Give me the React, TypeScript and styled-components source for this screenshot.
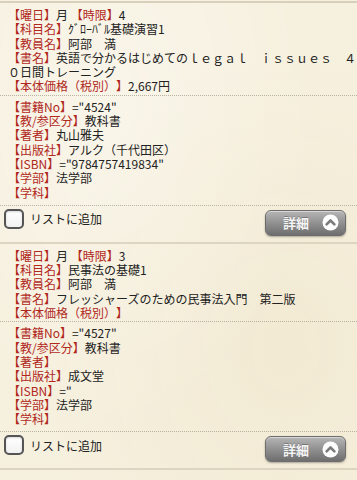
import React from "react";
import styled, { createGlobalStyle } from "styled-components";

const GlobalStyle = createGlobalStyle`
  html, body {
    margin: 0;
    padding: 0;
    background: #f6f0de;
  }
  body {
    font-family: "Noto Sans CJK JP", "Noto Sans", sans-serif;
    font-size: 12px;
    color: #222;
    text-spacing-trim: space-all;
  }
`;

const Page = styled.div`
  width: 357px;
  min-height: 480px;
  overflow: hidden;
  background:
    radial-gradient(ellipse at 30% 20%, rgba(255, 255, 255, 0.35), transparent 60%),
    radial-gradient(ellipse at 80% 70%, rgba(235, 222, 190, 0.35), transparent 60%),
    #f6f0de;
  padding-top: 1px;
`;

const List = styled.div`
  border-top: 2px solid #d9d0bc;
`;

const Item = styled.section`
  padding: 5px 0 0 8px;
  border-bottom: 2px solid #ddd5c2;
`;

const Block = styled.div`
  line-height: 14.3px;
`;

const Line = styled.div`
  word-break: break-all;
  text-spacing-trim: space-all;
`;

const Label = styled.span`
  color: #b0281c;
`;

const Value = styled.span`
  color: #222;
`;

const Dotted = styled.div<{ $gapTop: number; $gapBottom: number }>`
  border-top: 1px dotted #b9b1a1;
  margin: ${(p) => p.$gapTop}px 0 ${(p) => p.$gapBottom}px -8px;
`;

const Footer = styled.div`
  display: flex;
  justify-content: space-between;
  align-items: flex-start;
  margin: 0 0 0 -8px;
  padding: 0 11px 6px 4px;
`;

const CheckLabel = styled.label`
  display: flex;
  align-items: center;
  gap: 6px;
  height: 20px;
  font-size: 12px;
  color: #222;
`;

const Box = styled.span`
  box-sizing: border-box;
  width: 20px;
  height: 20px;
  border: 2px solid #555;
  border-radius: 5px;
  background: linear-gradient(#ffffff, #f2f2f2);
  box-shadow: inset 0 1px 2px rgba(0, 0, 0, 0.15);
`;

const DetailButton = styled.button`
  box-sizing: border-box;
  width: 81px;
  height: 26px;
  margin-top: 1px;
  border: 1px solid #6d6d6d;
  border-radius: 6px;
  background: linear-gradient(#b6b6b6, #919191 50%, #6e6e6e);
  box-shadow: 0 1px 2px rgba(0, 0, 0, 0.3), inset 0 1px 0 rgba(255, 255, 255, 0.45);
  display: flex;
  align-items: center;
  justify-content: space-between;
  padding: 0 6px 0 17px;
  color: #f4f4f4;
  font-family: "Noto Sans CJK JP", sans-serif;
  font-size: 13px;
  font-weight: bold;
  text-shadow: 0 -1px 0 rgba(0, 0, 0, 0.25);
`;

const Summary = styled.div`
  text-align: center;
  padding-top: 12px;
  font-size: 12px;
  color: #222;
`;

type Field = { label: string; value?: string };
type Row = Field[];

type Book = {
  top: Row[];
  bottom: Row[];
};

const books: Book[] = [
  {
    top: [
      [
        { label: "【曜日】", value: "月 " },
        { label: "【時限】", value: "4" },
      ],
      [{ label: "【科目名】", value: "ｸﾞﾛｰﾊﾞﾙ基礎演習1" }],
      [{ label: "【教員名】", value: "阿部　満" }],
      [
        {
          label: "【書名】",
          value: "英語で分かるはじめてのｌｅｇａｌ　ｉｓｓｕｅｓ　４０日間トレーニング",
        },
      ],
      [{ label: "【本体価格（税別）】", value: "2,667円" }],
    ],
    bottom: [
      [{ label: "【書籍No】", value: '="4524"' }],
      [{ label: "【教/参区分】", value: "教科書" }],
      [{ label: "【著者】", value: "丸山雅夫" }],
      [{ label: "【出版社】", value: "アルク（千代田区）" }],
      [{ label: "【ISBN】", value: '="9784757419834"' }],
      [{ label: "【学部】", value: "法学部" }],
      [{ label: "【学科】" }],
    ],
  },
  {
    top: [
      [
        { label: "【曜日】", value: "月 " },
        { label: "【時限】", value: "3" },
      ],
      [{ label: "【科目名】", value: "民事法の基礎1" }],
      [{ label: "【教員名】", value: "阿部　満" }],
      [{ label: "【書名】", value: "フレッシャーズのための民事法入門　第二版" }],
      [{ label: "【本体価格（税別）】" }],
    ],
    bottom: [
      [{ label: "【書籍No】", value: '="4527"' }],
      [{ label: "【教/参区分】", value: "教科書" }],
      [{ label: "【著者】" }],
      [{ label: "【出版社】", value: "成文堂" }],
      [{ label: "【ISBN】", value: '="' }],
      [{ label: "【学部】", value: "法学部" }],
      [{ label: "【学科】" }],
    ],
  },
];

const UpIcon = () => (
  <svg width="17" height="17" viewBox="0 0 17 17" aria-hidden="true">
    <circle cx="8.5" cy="8.5" r="8" fill="#fdfdfd" />
    <polyline
      points="4.6,10.4 8.5,6.5 12.4,10.4"
      fill="none"
      stroke="#7b7b7b"
      strokeWidth="2.6"
      strokeLinecap="round"
      strokeLinejoin="round"
    />
  </svg>
);

const Rows = ({ rows }: { rows: Row[] }) => (
  <Block>
    {rows.map((row, i) => (
      <Line key={i}>
        {row.map((f, j) => (
          <React.Fragment key={j}>
            <Label>{f.label}</Label>
            {f.value && <Value>{f.value}</Value>}
          </React.Fragment>
        ))}
      </Line>
    ))}
  </Block>
);

export default function App() {
  return (
    <>
      <GlobalStyle />
      <Page>
        <List>
          {books.map((b, i) => (
            <Item key={i}>
              <Rows rows={b.top} />
              <Dotted $gapTop={1} $gapBottom={4} />
              <Rows rows={b.bottom} />
              <Dotted $gapTop={5} $gapBottom={3} />
              <Footer>
                <CheckLabel>
                  <Box />
                  リストに追加
                </CheckLabel>
                <DetailButton type="button">
                  詳細
                  <UpIcon />
                </DetailButton>
              </Footer>
            </Item>
          ))}
        </List>
        <Summary>全6件中1から6件表示</Summary>
      </Page>
    </>
  );
}
